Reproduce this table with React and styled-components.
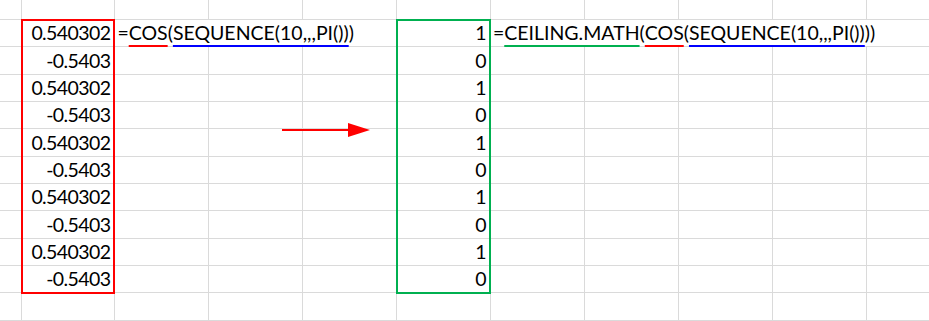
import styled, { createGlobalStyle } from "styled-components";

const GlobalStyle = createGlobalStyle`
  html, body {
    margin: 0;
    padding: 0;
    background: #ffffff;
    overflow: hidden;
  }
`;

const Sheet = styled.div`
  position: relative;
  display: grid;
  grid-template-columns: 21.5px repeat(9, 93.9px) 1fr;
  grid-template-rows: 20px repeat(11, 27.33px);
  width: 929px;
  height: 321px;
  background: #ffffff;
  color: #000000;
  font-family: Lato, "Liberation Sans", sans-serif;
  font-size: 19.5px;
`;

const Cell = styled.div`
  grid-row: ${(p) => p.$row + 1};
  grid-column: ${(p) => p.$col + 1} / span ${(p) => p.$span || 1};
  box-sizing: border-box;
  display: flex;
  align-items: flex-end;
  justify-content: ${(p) => (p.$num ? "flex-end" : "flex-start")};
  padding: 0 4px 2px 2px;
  border-right: ${(p) => (p.$last ? "none" : "1px solid #dadada")};
  border-bottom: 1px solid #dadada;
  white-space: nowrap;
  line-height: 22px;
  letter-spacing: ${(p) => (p.$num ? "-0.6px" : "0")};
`;

const Highlight = styled.div`
  grid-row: 2 / span 10;
  grid-column: ${(p) => p.$col + 1};
  margin: -1px 0 -1px -1px;
  border: 2px solid ${(p) => p.$color};
  pointer-events: none;
  z-index: 1;
`;

const Mark = styled.span`
  text-decoration-line: underline;
  text-decoration-color: ${(p) => p.$color};
  text-decoration-thickness: 2px;
  text-underline-offset: 5px;
  text-decoration-skip-ink: none;
`;

const Arrow = styled.svg`
  position: absolute;
  left: 282px;
  top: 122px;
  pointer-events: none;
`;

const RED = "#ff0000";
const GREEN = "#00b050";
const BLUE = "#0000ff";

const cosValues = Array.from({ length: 10 }, (_, i) =>
  i % 2 === 0 ? "0.540302" : "-0.5403"
);
const ceilValues = Array.from({ length: 10 }, (_, i) => (i % 2 === 0 ? "1" : "0"));

function buildCells() {
  const cells = [];
  for (let r = 0; r < 12; r++) {
    let c = 0;
    while (c < 11) {
      const key = `${r}-${c}`;
      if (r === 1 && c === 2) {
        cells.push(
          <Cell key={key} $row={r} $col={c} $span={3}>
            =<Mark $color={RED}>COS</Mark>(<Mark $color={BLUE}>SEQUENCE(10,,,PI())</Mark>)
          </Cell>
        );
        c += 3;
        continue;
      }
      if (r === 1 && c === 6) {
        cells.push(
          <Cell key={key} $row={r} $col={c} $span={5} $last>
            =<Mark $color={GREEN}>CEILING.MATH</Mark>(<Mark $color={RED}>COS</Mark>(
            <Mark $color={BLUE}>SEQUENCE(10,,,PI())</Mark>))
          </Cell>
        );
        c += 5;
        continue;
      }
      let text = "";
      if (r >= 1 && r <= 10 && c === 1) text = cosValues[r - 1];
      if (r >= 1 && r <= 10 && c === 5) text = ceilValues[r - 1];
      cells.push(
        <Cell key={key} $row={r} $col={c} $num={!!text} $last={c === 10}>
          {text}
        </Cell>
      );
      c += 1;
    }
  }
  return cells;
}

export default function App() {
  return (
    <>
      <GlobalStyle />
      <Sheet>
        {buildCells()}
        <Highlight $col={1} $color={RED} />
        <Highlight $col={5} $color={GREEN} />
        <Arrow width="90" height="16" viewBox="0 0 90 16">
          <line x1="0" y1="8" x2="68" y2="8" stroke={RED} strokeWidth="2.2" />
          <polygon points="66,1 88,8 66,15" fill={RED} />
        </Arrow>
      </Sheet>
    </>
  );
}
